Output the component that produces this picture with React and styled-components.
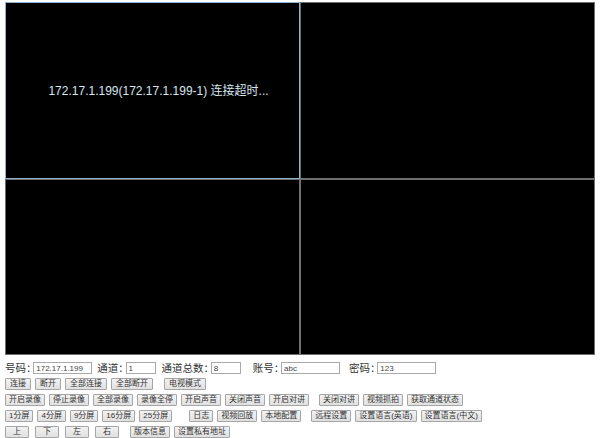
import styled, { createGlobalStyle } from "styled-components";

const GlobalStyle = createGlobalStyle`
  body {
    margin: 0;
    background: #fff;
    font-family: "Liberation Sans", "Noto Sans CJK SC", sans-serif;
  }
`;

const Page = styled.div`
  padding: 2px 0 0 5px;
`;

const VideoGrid = styled.div`
  display: grid;
  grid-template-columns: 295px 295px;
  grid-template-rows: 177px 176px;
  width: 590px;
`;

const Pane = styled.div`
  box-sizing: border-box;
  background: #000;
  border: 1px solid ${({ $active }) => ($active ? "#8eb2cc" : "#6f6f6f")};
  display: flex;
  align-items: center;
  justify-content: center;
  padding: 0 0 2px 12px;
`;

const PaneMessage = styled.span`
  color: #d6e6ef;
  font-size: 12px;
  font-family: "Liberation Sans", "Noto Sans CJK SC", sans-serif;
  white-space: nowrap;
`;

const Controls = styled.div`
  display: flex;
  flex-direction: column;
  gap: 4px;
  margin-top: 7px;
`;

const Row = styled.div`
  display: flex;
  align-items: center;
  gap: ${({ $tight }) => ($tight ? 0 : 4)}px;
  height: 12px;
`;

const Label = styled.span`
  font-family: "Noto Sans CJK SC", sans-serif;
  font-feature-settings: "halt";
  font-size: 10.5px;
  line-height: 12px;
  color: #333;
  margin: 0 2px 0 ${({ $gap }) => $gap || 0}px;
  white-space: nowrap;
`;

const Field = styled.input`
  box-sizing: border-box;
  width: ${({ $w }) => $w}px;
  height: 12px;
  margin: 0;
  padding: 0 2px;
  border: 1px solid #a9a9a9;
  background: #fff;
  font-family: "Liberation Sans", sans-serif;
  font-size: 8px;
  color: #444;
  outline: none;
`;

const Button = styled.button`
  box-sizing: border-box;
  height: 12px;
  margin: 0 0 0 ${({ $gap }) => $gap || 0}px;
  padding: 0 ${({ $pad }) => $pad || 3}px;
  border: 1px solid #a6a6a6;
  border-radius: 1px;
  background: linear-gradient(#f2f2f2, #e0e0e0);
  font-family: "Liberation Sans", "Noto Sans CJK SC", sans-serif;
  font-size: 8px;
  line-height: 10px;
  color: #333;
  white-space: nowrap;
  cursor: pointer;
`;

// [text, extra gap before], padding per row
const rows = [
  {
    pad: 4,
    items: [["连接"], ["断开"], ["全部连接"], ["全部断开"], ["电视模式", 7]],
  },
  {
    pad: 3,
    items: [
      ["开启录像"], ["停止录像"], ["全部录像"], ["录像全停"], ["开启声音"],
      ["关闭声音"], ["开启对讲"], ["关闭对讲", 6], ["视频抓拍"], ["获取通道状态"],
    ],
  },
  {
    pad: 3,
    items: [
      ["1分屏"], ["4分屏"], ["9分屏"], ["16分屏"], ["25分屏"], ["日志", 13],
      ["视频回放"], ["本地配置"], ["远程设置", 6], ["设置语言(英语)"], ["设置语言(中文)"],
    ],
  },
];

const moves = ["上", "下", "左", "右"];

export default function App() {
  return (
    <Page>
      <GlobalStyle />
      <VideoGrid>
        <Pane $active>
          <PaneMessage>172.17.1.199(172.17.1.199-1) 连接超时...</PaneMessage>
        </Pane>
        <Pane />
        <Pane />
        <Pane />
      </VideoGrid>

      <Controls>
        <Row $tight>
          <Label>号码：</Label>
          <Field $w={59} defaultValue="172.17.1.199" />
          <Label $gap={5}>通道：</Label>
          <Field $w={30} defaultValue="1" />
          <Label $gap={6}>通道总数：</Label>
          <Field $w={30} defaultValue="8" />
          <Label $gap={12}>账号：</Label>
          <Field $w={59} defaultValue="abc" />
          <Label $gap={9}>密码：</Label>
          <Field $w={59} defaultValue="123" />
        </Row>

        {rows.map(({ pad, items }, i) => (
          <Row key={i}>
            {items.map(([text, gap]) => (
              <Button key={text} $gap={gap} $pad={pad}>
                {text}
              </Button>
            ))}
          </Row>
        ))}

        <Row>
          {moves.map((text, i) => (
            <Button key={text} $pad={7} $gap={i ? 2 : 0}>
              {text}
            </Button>
          ))}
          <Button $gap={7}>版本信息</Button>
          <Button>设置私有地址</Button>
        </Row>
      </Controls>
    </Page>
  );
}
